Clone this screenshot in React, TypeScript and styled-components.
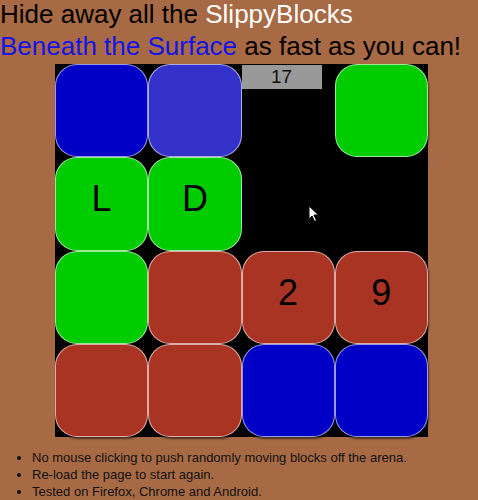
import React from 'react';
import styled, { createGlobalStyle } from 'styled-components';

type Tone = 'blue' | 'violet' | 'green' | 'red';

interface Cell {
  tone?: Tone;
  label?: string;
}

const tones: Record<Tone, string> = {
  blue: '#0000c6',
  violet: '#3532cb',
  green: '#00cc00',
  red: '#aa3424',
};

const board: Cell[] = [
  { tone: 'blue' },
  { tone: 'violet' },
  {},
  { tone: 'green' },
  { tone: 'green', label: 'L' },
  { tone: 'green', label: 'D' },
  {},
  {},
  { tone: 'green' },
  { tone: 'red' },
  { tone: 'red', label: '2' },
  { tone: 'red', label: '9' },
  { tone: 'red' },
  { tone: 'red' },
  { tone: 'blue' },
  { tone: 'blue' },
];

const notes = [
  'No mouse clicking to push randomly moving blocks off the arena.',
  'Re-load the page to start again.',
  'Tested on Firefox, Chrome and Android.',
];

const App = () => {
  return (
    <Page>
      <GlobalStyle />
      <Title>
        Hide away all the <Brand>SlippyBlocks</Brand>
      </Title>
      <Subtitle>
        <Accent>Beneath the Surface</Accent> as fast as you can!
      </Subtitle>

      <Arena>
        {board.map((cell, i) =>
          cell.tone ? (
            <Block key={i} $tone={cell.tone}>
              {cell.label}
            </Block>
          ) : i === 2 ? (
            <Score key={i}>17</Score>
          ) : (
            <EmptyCell key={i} />
          )
        )}
        <Cursor width="12" height="18" viewBox="0 0 12 18">
          <path d="M1 1 L1 14 L4 11 L6.5 16.5 L8.5 15.5 L6 10 L10.5 10 Z" fill="#fff" stroke="#000" strokeWidth="1" />
        </Cursor>
        <Ring />
      </Arena>

      <Notes>
        {notes.map((n) => (
          <Note key={n}>{n}</Note>
        ))}
      </Notes>
    </Page>
  );
};

export default App;

const GlobalStyle = createGlobalStyle`
  html, body {
    margin: 0;
    padding: 0;
    background-color: #a76a44;
  }
  body {
    font-family: "Liberation Sans", Arial, sans-serif;
  }
`;

const Page = styled.div`
  width: 478px;
  height: 500px;
  overflow: hidden;
  background-color: #a76a44;
`;

const Title = styled.h1`
  margin: -1px 0 0;
  font-size: 26px;
  font-weight: 400;
  line-height: 30px;
  color: #000;
`;

const Subtitle = styled(Title)`
  margin-top: 2px;
`;

const Brand = styled.span`
  color: #fff;
`;

const Accent = styled.span`
  color: #1414e6;
`;

const Arena = styled.div`
  position: relative;
  margin: 3px 0 0 55px;
  width: 373px;
  height: 373px;
  background-color: #000;
  display: grid;
  grid-template-columns: repeat(4, 93.25px);
  grid-template-rows: repeat(4, 93.25px);
`;

const EmptyCell = styled.span``;

const Block = styled.div<{ $tone: Tone }>`
  box-sizing: border-box;
  display: flex;
  align-items: center;
  justify-content: center;
  padding-bottom: 9px;
  background-color: ${(p) => tones[p.$tone]};
  border: 1px solid rgba(255, 255, 255, 0.6);
  border-radius: 22px;
  box-shadow: 1px 2px 2px rgba(0, 0, 0, 0.55);
  font-size: 36px;
  color: #000;
`;

const Score = styled.div`
  justify-self: start;
  align-self: start;
  width: 80px;
  height: 24px;
  margin-top: 1px;
  background-color: #999;
  color: #111;
  font-size: 19px;
  line-height: 24px;
  text-align: center;
`;

const Cursor = styled.svg`
  position: absolute;
  left: 253px;
  top: 141px;
`;

const Ring = styled.div`
  position: absolute;
  left: 373px;
  top: 94px;
  width: 6px;
  height: 6px;
  border: 1px solid rgba(150, 110, 100, 0.9);
  border-radius: 50%;
`;

const Notes = styled.ul`
  margin: 12px 0 0;
  padding-left: 32px;
  font-size: 13px;
  line-height: 17px;
  color: #111;
`;

const Note = styled.li`
  padding-left: 0;
`;
